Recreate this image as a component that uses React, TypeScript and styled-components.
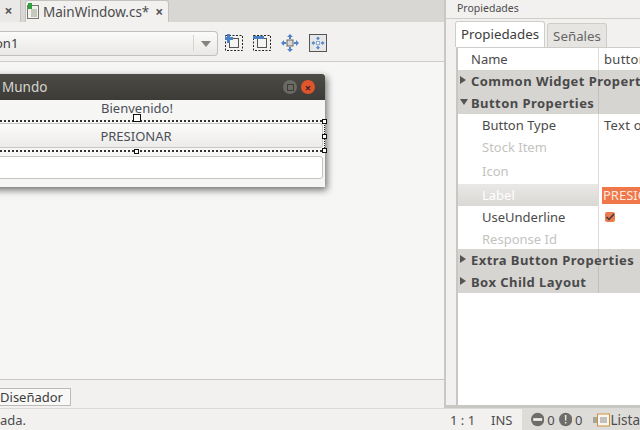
import React from "react";
import styled, { createGlobalStyle } from "styled-components";

const GlobalStyle = createGlobalStyle`
    html, body {
        margin: 0;
        padding: 0;
        background: #f2f1f0;
    }
    body {
        font-family: "Noto Sans", "Open Sans", sans-serif;
        font-size: 13px;
        color: #3c3c3c;
    }
`;

const properties = [
    { kind: "row", name: "Name", value: "button1" },
    { kind: "group", name: "Common Widget Properties", open: false },
    { kind: "group", name: "Button Properties", open: true },
    { kind: "child", name: "Button Type", value: "Text only" },
    { kind: "child", name: "Stock Item", muted: true },
    { kind: "child", name: "Icon", muted: true, height: 26 },
    { kind: "selected", name: "Label", value: "PRESIONAR" },
    { kind: "check", name: "UseUnderline" },
    { kind: "child", name: "Response Id", muted: true, height: 21 },
    { kind: "group", name: "Extra Button Properties", open: false },
    { kind: "group", name: "Box Child Layout", open: false },
];

const DashedIcon: React.FC<{ mark: "plus" | "minus" }> = ({ mark }) => (
    <svg width="18" height="18" viewBox="0 0 18 18">
        <rect x="0.5" y="1.5" width="17" height="15" fill="none" stroke="#222" strokeDasharray="2 1.5" />
        <rect x="4.5" y="4.5" width="9" height="9" fill="#f4f4f2" stroke="#555" />
        {mark === "plus" ? (
            <path d="M2 0h3v3h3v3H5v3H2V6H0V3h2z" fill="#4a7fc4" />
        ) : (
            <rect x="0" y="2" width="11" height="3" fill="#4a7fc4" />
        )}
    </svg>
);

const Arrows: React.FC = () => (
    <path
        d="M9 0l3 3h-2v2H8V3H6zM9 18l-3-3h2v-2h2v2h2zM0 9l3-3v2h2v2H3v2zM18 9l-3 3v-2h-2V8h2V6z"
        fill="#4f82c6"
    />
);

const MoveIcon: React.FC = () => (
    <svg width="18" height="18" viewBox="0 0 18 18">
        <Arrows />
        <rect x="6" y="6" width="6" height="6" fill="#d8d7d3" stroke="#666" />
    </svg>
);

const FillIcon: React.FC = () => (
    <svg width="18" height="18" viewBox="0 0 18 18">
        <rect x="0.5" y="0.5" width="17" height="17" fill="#e6e7e8" stroke="#555" />
        <g transform="translate(2.5 2.5) scale(0.72)">
            <Arrows />
        </g>
        <rect x="7.5" y="7.5" width="3" height="3" fill="#fff" stroke="#8aa9d4" />
    </svg>
);

const FileIcon: React.FC = () => (
    <svg width="14" height="17" viewBox="0 0 14 17">
        <rect x="1.5" y="2.5" width="11" height="13" fill="#f1f3ea" stroke="#777" />
        <path d="M5 7h6M5 9h6M5 11h6M5 13h6" stroke="#9aa08e" />
        <rect x="2" y="0" width="4" height="6" fill="#2fa13a" />
    </svg>
);

const StatusDot: React.FC<{ mark: "minus" | "bang" }> = ({ mark }) => (
    <svg width="15" height="15" viewBox="0 0 15 15">
        <circle cx="7.5" cy="7.5" r="7.5" fill="#6f6d69" />
        {mark === "minus" ? (
            <rect x="2.5" y="6" width="10" height="3" fill="#f2f1f0" />
        ) : (
            <path d="M6.5 2.5h2l-.3 6.5h-1.4zM6.6 10.2h1.8V12H6.6z" fill="#e4e3e0" />
        )}
    </svg>
);

const ListIcon: React.FC = () => (
    <svg width="17" height="14" viewBox="0 0 17 14">
        <rect x="0" y="4" width="4" height="6" fill="#a5a49f" />
        <rect x="4.5" y="1" width="12" height="12" fill="#f7f5ef" stroke="#d1913c" />
        <path d="M7 5h7M7 7h7M7 9h7" stroke="#8b8b88" />
    </svg>
);

export default function App() {
    return (
        <>
            <GlobalStyle />
            <Page>
                <Main>
                    <TabBar>
                        <TabStub>
                            <Close>×</Close>
                        </TabStub>
                        <Tab>
                            <FileIcon />
                            <TabLabel>MainWindow.cs*</TabLabel>
                            <Close>×</Close>
                        </Tab>
                    </TabBar>
                    <Toolbar>
                        <Combo>
                            <ComboText>on1</ComboText>
                            <ComboArrow />
                        </Combo>
                        <ToolIcons>
                            <DashedIcon mark="plus" />
                            <DashedIcon mark="minus" />
                            <MoveIcon />
                            <FillIcon />
                        </ToolIcons>
                    </Toolbar>
                    <Canvas>
                        <DesignWindow>
                            <TitleBar>
                                <TitleText>Mundo</TitleText>
                                <WindowButton>
                                    <MaxGlyph />
                                </WindowButton>
                                <WindowButton $close>×</WindowButton>
                            </TitleBar>
                            <WelcomeLabel>Bienvenido!</WelcomeLabel>
                            <SelectedArea>
                                <PressButton>PRESIONAR</PressButton>
                                <Handle $side="top" $big />
                                <Handle $side="bottom" />
                                <Handle $side="right" />
                                <Handle $side="topRight" />
                                <Handle $side="bottomRight" />
                            </SelectedArea>
                            <EntryBox />
                        </DesignWindow>
                    </Canvas>
                    <ViewBar>
                        <ViewButton>Diseñador</ViewButton>
                    </ViewBar>
                </Main>
                <Side>
                    <PanelTitle>Propiedades</PanelTitle>
                    <Notebook>
                        <PanelTabs>
                            <PanelTab $active>Propiedades</PanelTab>
                            <PanelTab>Señales</PanelTab>
                        </PanelTabs>
                        <PropertyList>
                            {properties.map((p) => (
                                <PropertyRow key={p.name} $kind={p.kind} $height={p.height ?? 22}>
                                    <NameCell $kind={p.kind} $muted={!!p.muted}>
                                        {p.kind === "group" && <Caret $open={!!p.open} />}
                                        <span>{p.name}</span>
                                    </NameCell>
                                    <ValueCell $kind={p.kind}>
                                        {p.kind === "selected" ? (
                                            <SelectedValue>{p.value}</SelectedValue>
                                        ) : p.kind === "check" ? (
                                            <CheckMark>
                                                <svg width="10" height="10" viewBox="0 0 10 10">
                                                    <path d="M1.5 5l2.5 2.5L9 2" fill="none" stroke="#3a3a3a" strokeWidth="1.5" />
                                                </svg>
                                            </CheckMark>
                                        ) : (
                                            p.value
                                        )}
                                    </ValueCell>
                                </PropertyRow>
                            ))}
                        </PropertyList>
                    </Notebook>
                </Side>
                <StatusBar>
                    <StatusText>ada.</StatusText>
                    <CaretPos>1 : 1</CaretPos>
                    <InsMode>INS</InsMode>
                    <Issues>
                        <StatusDot mark="minus" />
                        <Count>0</Count>
                        <StatusDot mark="bang" />
                        <Count>0</Count>
                        <ListSlot>
                            <ListIcon />
                            <span>Lista</span>
                        </ListSlot>
                    </Issues>
                </StatusBar>
            </Page>
        </>
    );
}

const Page = styled.div`
    width: 640px;
    height: 430px;
    overflow: hidden;
    display: grid;
    grid-template-columns: 445px 195px;
    grid-template-rows: 408px 22px;
    background: #f2f1f0;
`;

const Main = styled.div`
    display: flex;
    flex-direction: column;
    min-width: 0;
    border-right: 1px solid #c9c7c3;
`;

const TabBar = styled.div`
    height: 22px;
    display: flex;
    background: #d9d7d4;
`;

const TabStub = styled.div`
    width: 21px;
    display: flex;
    align-items: center;
    justify-content: center;
    padding-right: 3px;
    box-sizing: border-box;
    background: #ebe9e7;
    border-right: 1px solid #c4c2be;
`;

const Tab = styled.div`
    margin-left: 4px;
    width: 144px;
    display: flex;
    align-items: center;
    gap: 3px;
    box-sizing: border-box;
    background: #f2f1f0;
    border: 1px solid #c4c2be;
    border-bottom: none;
    border-radius: 3px 3px 0 0;
`;

const TabLabel = styled.span`
    font-size: 13.5px;
    color: #4c4c4c;
    margin-right: 3px;
`;

const Close = styled.span`
    font-size: 14px;
    font-weight: 700;
    color: #555;
    line-height: 1;
`;

const Toolbar = styled.div`
    height: 40px;
    display: flex;
    align-items: center;
    gap: 7px;
    padding-top: 3px;
    border-bottom: 1px solid #cfcdc9;
    box-sizing: border-box;
`;

const Combo = styled.div`
    width: 218px;
    height: 25px;
    display: flex;
    align-items: center;
    box-sizing: border-box;
    background: linear-gradient(#fbfbfa, #e9e8e6);
    border: 1px solid #c2c0bc;
    border-left: none;
    border-radius: 0 4px 4px 0;
`;

const ComboText = styled.span`
    flex: 1;
    margin-left: -5px;
    color: #3c3c3c;
`;

const ComboArrow = styled.span`
    width: 23px;
    height: 16px;
    border-left: 1px solid #d5d3cf;
    position: relative;
    &::after {
        content: "";
        position: absolute;
        left: 7px;
        top: 6px;
        border-left: 5px solid transparent;
        border-right: 5px solid transparent;
        border-top: 6px solid #86847f;
    }
`;

const ToolIcons = styled.div`
    display: flex;
    align-items: center;
    gap: 10px;
`;

const Canvas = styled.div`
    height: 318px;
    box-sizing: border-box;
    padding-top: 12px;
    background: #f6f6f5;
    border-bottom: 1px solid #c9c7c3;
    overflow: hidden;
`;

const DesignWindow = styled.div`
    width: 376px;
    height: 113px;
    margin-left: -51px;
    background: #f6f6f5;
    box-shadow: 2px 3px 7px rgba(0, 0, 0, 0.55);
`;

const TitleBar = styled.div`
    height: 26px;
    display: flex;
    align-items: center;
    gap: 4px;
    padding: 0 10px 0 53px;
    background: linear-gradient(#4d4b46, #3c3b37);
    border-radius: 3px 3px 0 0;
`;

const TitleText = styled.span`
    flex: 1;
    font-size: 13.5px;
    color: #d8d6d0;
`;

const WindowButton = styled.span<{ $close?: boolean }>`
    width: 14px;
    height: 14px;
    border-radius: 50%;
    display: flex;
    align-items: center;
    justify-content: center;
    font-size: 11px;
    line-height: 1;
    font-weight: 700;
    color: #40261c;
    background: ${({ $close }) => ($close ? "#e0552b" : "#6b6a65")};
`;

const MaxGlyph = styled.span`
    width: 5px;
    height: 5px;
    border: 1px solid #3c3b37;
`;

const WelcomeLabel = styled.div`
    height: 20px;
    line-height: 17px;
    text-align: center;
    font-size: 13px;
    color: #4a4f57;
`;

const SelectedArea = styled.div`
    position: relative;
    height: 32px;
    box-sizing: border-box;
    padding: 1px 0;
    border-top: 2px dotted #333;
    border-bottom: 2px dotted #333;
    border-right: 1px dotted #222;
`;

const PressButton = styled.div`
    height: 25px;
    margin-right: 1px;
    line-height: 24px;
    text-align: center;
    font-size: 13px;
    color: #4c4f55;
    box-sizing: border-box;
    background: linear-gradient(#fbfbfa, #ecebe9);
    border: 1px solid #c9c7c3;
    border-radius: 3px;
`;

const handleOffsets = {
    top: "top: -8px; left: 184px;",
    bottom: "bottom: -4px; left: 185px;",
    right: "top: 12px; right: -3px;",
    topRight: "top: -3px; right: -3px;",
    bottomRight: "bottom: -3px; right: -3px;",
};

const Handle = styled.span<{ $side: keyof typeof handleOffsets; $big?: boolean }>`
    position: absolute;
    ${({ $side }) => handleOffsets[$side]}
    width: ${({ $big }) => ($big ? "6px" : "3px")};
    height: ${({ $big }) => ($big ? "6px" : "3px")};
    background: #fff;
    border: 1px solid #111;
`;

const EntryBox = styled.div`
    height: 23px;
    margin: 4px 2px 0 0;
    box-sizing: border-box;
    background: #fff;
    border: 1px solid #c6c4c0;
    border-radius: 3px;
`;

const ViewBar = styled.div`
    flex: 1;
    padding-top: 8px;
    box-sizing: border-box;
    background: #f2f1f0;
`;

const ViewButton = styled.div`
    width: 71px;
    height: 18px;
    line-height: 16px;
    box-sizing: border-box;
    text-align: right;
    padding-right: 7px;
    font-size: 13px;
    color: #3c3c3c;
    background: #f8f8f7;
    border: 1px solid #bdbbb7;
    border-left: none;
`;

const Side = styled.div`
    display: flex;
    flex-direction: column;
    min-width: 0;
    background: #f2f1f0;
`;

const PanelTitle = styled.div`
    height: 18px;
    line-height: 16px;
    padding-left: 11px;
    font-size: 10.5px;
    color: #4c4c4c;
    border-left: 1px solid #c9c7c3;
    border-bottom: 1px solid #d0cec9;
`;

const Notebook = styled.div`
    flex: 1;
    display: flex;
    flex-direction: column;
    padding-left: 10px;
    border-left: 1px solid #c9c7c3;
    border-bottom: 3px solid #c9c7c3;
`;

const PanelTabs = styled.div`
    height: 28px;
    padding-top: 2px;
    box-sizing: border-box;
    display: flex;
    align-items: flex-end;
    margin-left: -1px;
    gap: 2px;
`;

const PanelTab = styled.div<{ $active?: boolean }>`
    height: ${({ $active }) => ($active ? "26px" : "24px")};
    line-height: 24px;
    padding: 0 5px;
    box-sizing: border-box;
    font-size: 13.3px;
    color: ${({ $active }) => ($active ? "#3c3c3c" : "#666")};
    background: ${({ $active }) => ($active ? "#fff" : "#e6e5e2")};
    border: 1px solid #cfcdc9;
    border-bottom: none;
    border-radius: 3px 3px 0 0;
`;

const PropertyList = styled.div`
    flex: 1;
    background: #fff;
    border-left: 2px solid #c9c7c3;
    border-top: 1px solid #cfcdc9;
`;

const PropertyRow = styled.div<{ $kind: string; $height: number }>`
    height: ${({ $height }) => $height}px;
    display: grid;
    grid-template-columns: 141px 1fr;
    font-size: 13px;
    white-space: nowrap;
    overflow: hidden;
    background: ${({ $kind }) => ($kind === "group" ? "#d6d5d2" : "#fff")};
`;

const NameCell = styled.div<{ $kind: string; $muted: boolean }>`
    display: flex;
    align-items: center;
    position: relative;
    overflow: visible;
    padding-left: ${({ $kind }) => ($kind === "row" || $kind === "group" ? "13px" : "24px")};
    font-weight: ${({ $kind }) => ($kind === "group" ? 700 : 400)};
    letter-spacing: ${({ $kind }) => ($kind === "group" ? "0.45px" : "0")};
    color: ${({ $muted, $kind }) =>
        $kind === "selected" ? "#fff" : $muted ? "#c4c3c0" : "#4a4a4a"};
    background: ${({ $kind }) =>
        $kind === "selected" ? "linear-gradient(#e9e8e6, #d9d8d5)" : "transparent"};
    border-right: ${({ $kind }) => ($kind === "group" ? "none" : "1px solid #dedcd9")};
    box-shadow: ${({ $kind }) => ($kind === "group" ? "inset -1px 0 0 #c2c0bd" : "none")};
`;

const Caret = styled.span<{ $open: boolean }>`
    position: absolute;
    left: 2px;
    top: 6px;
    width: 0;
    height: 0;
    ${({ $open }) =>
        $open
            ? `border-left: 4px solid transparent;
               border-right: 4px solid transparent;
               border-top: 6px solid #555;
               top: 7px;`
            : `border-top: 4px solid transparent;
               border-bottom: 4px solid transparent;
               border-left: 6px solid #555;`}
`;

const ValueCell = styled.div<{ $kind: string }>`
    display: flex;
    align-items: center;
    padding-left: 5px;
    letter-spacing: ${({ $kind }) => ($kind === "selected" ? "0" : "0.3px")};
    color: #4a4a4a;
    background: ${({ $kind }) => ($kind === "selected" ? "#fff" : "transparent")};
`;

const SelectedValue = styled.span`
    background: #f0774a;
    color: #fde9df;
    height: 17px;
    line-height: 16px;
    padding-left: 1px;
    margin-left: -2px;
    flex: 1;
`;

const CheckMark = styled.span`
    width: 10px;
    height: 10px;
    display: flex;
    margin-left: 1px;
    background: #ec7a50;
    border-radius: 2px;
`;

const StatusBar = styled.div`
    grid-column: 1 / 3;
    display: flex;
    align-items: center;
    font-size: 13px;
    color: #4c4c4c;
    background: #f2f1f0;
    border-top: 1px solid #dcdad6;
    box-sizing: border-box;
`;

const StatusText = styled.span`
    flex: 0 0 450px;
`;

const CaretPos = styled.span`
    flex: 0 0 41px;
`;

const InsMode = styled.span`
    flex: 0 0 31px;
`;

const Issues = styled.div`
    flex: 1;
    min-width: 0;
    height: 100%;
    display: flex;
    align-items: center;
    gap: 3px;
    padding-left: 9px;
    overflow: hidden;
    white-space: nowrap;
    background: #dedcd9;
`;

const Count = styled.span`
    margin-right: 1px;
`;

const ListSlot = styled.span`
    display: flex;
    align-items: center;
    gap: 1px;
    margin-left: 6px;
    font-size: 13.5px;
`;
